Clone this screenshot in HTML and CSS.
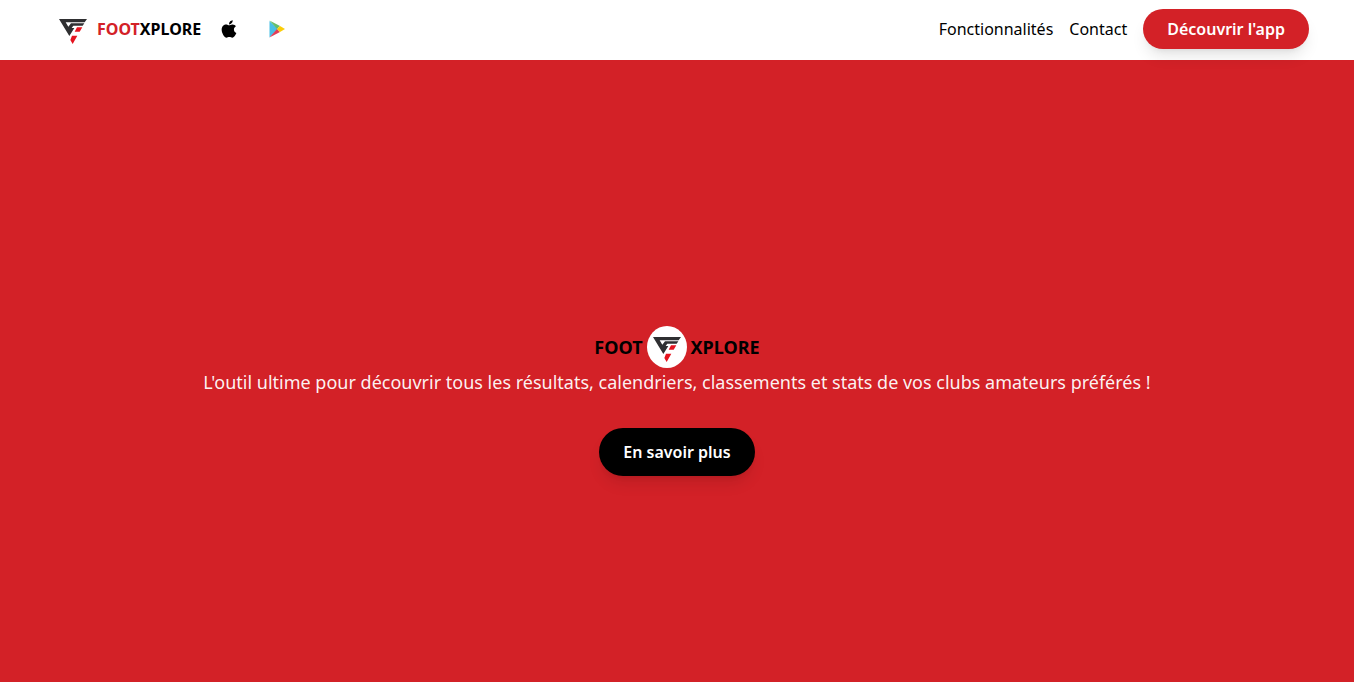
FILE: index.html
```html
<!DOCTYPE html>
<html lang="fr">
<head>
    <meta charset="UTF-8">
    <meta name="viewport" content="width=device-width, initial-scale=1.0">
    <title>FootXplore</title>
    <link rel="stylesheet" href="styles.css">
</head>
<body>
    <svg class="symbols" aria-hidden="true">
        <symbol id="logo" viewBox="0 0 84 75">
            <path fill="#2f2f31" d="M0 0H84L77 10H20L28 23L36 13H76L71 20H43L38 27H46L31 51Z"/>
            <path fill="#e5141f" d="M54 25H70L62 38H47ZM39 50H55L41 75L34 63Z"/>
        </symbol>
    </svg>

    <header class="header">
        <div class="brand">
            <svg class="logo" role="img" aria-label="Logo FootXplore"><use href="#logo"/></svg>
            <span class="brand-name"><span class="brand-red">FOOT</span>XPLORE</span>
            <a href="#" class="store" aria-label="App Store">
                <svg class="apple" viewBox="0 0 384 512">
                    <path d="M318.700 268.700c-.2-36.700 16.400-64.400 50-84.800-18.800-26.900-47.200-41.700-84.700-44.600-35.500-2.800-74.300 20.700-88.500 20.700-15 0-49.400-19.700-76.400-19.700C63.300 141.200 4 184.800 4 273.500q0 39.300 14.400 81.200c12.800 36.700 59 126.700 107.200 125.200 25.200-.6 43-17.900 75.800-17.900 31.800 0 48.300 17.900 76.400 17.900 48.600-.7 90.400-82.500 102.600-119.300-65.200-30.700-61.700-90-61.700-91.900zm-56.600-164.200c27.300-32.400 24.800-61.900 24-72.500-24.100 1.400-52 16.400-67.900 34.900-17.500 19.800-27.800 44.300-25.600 71.900 26.100 2 49.900-11.400 69.500-34.300z"/>
                </svg>
            </a>
            <a href="#" class="store" aria-label="Google Play">
                <svg class="play" viewBox="0 0 16 18">
                    <path fill="#48bfe6" d="M0.500 1V17.500L9 9Z"/>
                    <path fill="#65bd6b" d="M0.500 0.500L11 6L8 9Z"/>
                    <path fill="#e23d56" d="M0.500 17.500L11 12L8 9Z"/>
                    <path fill="#fbcd08" d="M11 6L16 9L11 12L8 9Z"/>
                </svg>
            </a>
        </div>
        <nav class="nav">
            <a href="#fonctionnalites">Fonctionnalités</a>
            <a href="#contact">Contact</a>
            <button class="btn btn-red">Découvrir l'app</button>
        </nav>
    </header>

    <main class="hero">
        <h1 class="hero-title">
            FOOT
            <span class="hero-badge">
                <svg class="logo" role="img" aria-label="Logo FootXplore"><use href="#logo"/></svg>
            </span>
            XPLORE
        </h1>
        <p class="hero-text">L'outil ultime pour découvrir tous les résultats, calendriers, classements et stats de vos clubs amateurs préférés !</p>
        <button class="btn btn-black">En savoir plus</button>
    </main>
</body>
</html>
```
FILE: styles.css
```css
* {
    box-sizing: border-box;
}
body {
    margin: 0;
    padding-right: 12px;
    min-height: 100vh;
    display: flex;
    flex-direction: column;
    background-color: #fff;
    color: #000;
    font-family: "Noto Sans", sans-serif;
    font-size: 16px;
    line-height: 24px;
}
a {
    color: inherit;
    text-decoration: none;
}
.symbols {
    display: none;
}

/* Header */
.header {
    display: flex;
    align-items: center;
    justify-content: space-between;
    height: 60px;
    padding: 0 45px 2px 59px;
}
.brand {
    display: flex;
    align-items: center;
}
.logo {
    width: 28px;
    height: 29px;
    padding-top: 4px;
}
.brand-name {
    margin: 0 4px 0 10px;
    font-weight: 700;
}
.brand-red {
    color: #d32127;
}
.store {
    display: flex;
    justify-content: center;
    width: 48px;
}
.apple {
    width: 16px;
    height: 20px;
}
.play {
    width: 16px;
    height: 18px;
}
.nav {
    display: flex;
    align-items: center;
    gap: 16px;
}

/* Buttons */
.btn {
    padding: 8px 24px;
    border: none;
    border-radius: 24px;
    color: #fff;
    font-family: inherit;
    font-size: 16px;
    font-weight: 600;
    line-height: 24px;
    cursor: pointer;
    box-shadow: 0 10px 15px -3px rgba(0, 0, 0, 0.1), 0 4px 6px -4px rgba(0, 0, 0, 0.1);
}
.btn-red {
    position: relative;
    background-color: #d32127;
}
.btn-black {
    padding: 12px 24px;
    background-color: #000;
}

/* Hero */
.hero {
    flex: 1;
    display: flex;
    flex-direction: column;
    align-items: center;
    justify-content: center;
    padding: 60px 16px 0;
    background-color: #d32127;
    text-align: center;
}
.hero-title {
    display: flex;
    align-items: center;
    gap: 4px;
    margin: 0;
    font-size: 18px;
    font-weight: 700;
    line-height: 28px;
}
.hero-badge {
    display: flex;
    align-items: center;
    justify-content: center;
    width: 40px;
    height: 42px;
    border-radius: 50%;
    background-color: #fff;
}
.hero-text {
    margin: 0 0 32px;
    color: rgba(255, 255, 255, 0.95);
    font-size: 18px;
    line-height: 28px;
}
```
